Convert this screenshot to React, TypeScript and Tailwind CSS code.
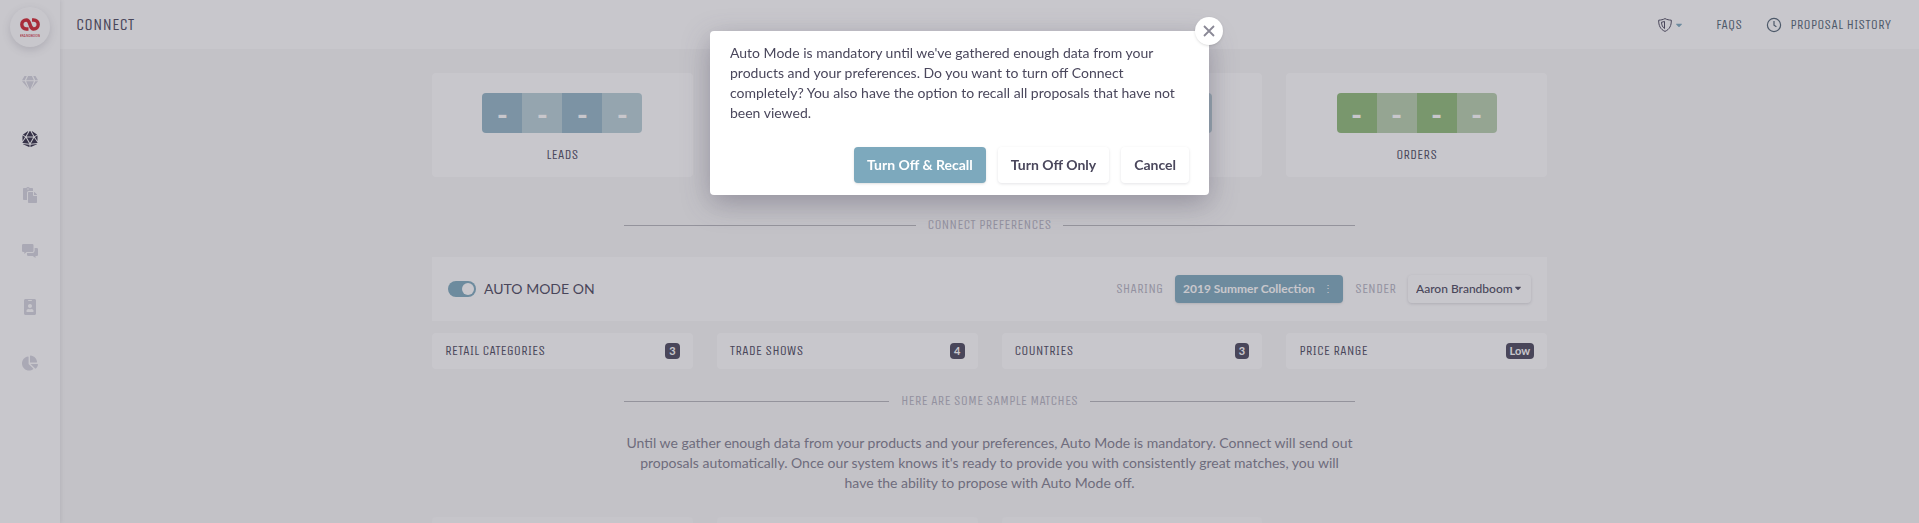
import type { ReactNode } from 'react'
import { clsx } from 'clsx'
import { FaCaretDown, FaChartPie, FaDiceD20, FaGem, FaIdBadge, FaPaste } from 'react-icons/fa'

const condensed = "font-['Unica_One','Roboto_Condensed',sans-serif] uppercase"

const CommentsIcon = ({ className }: { className?: string }) => (
  <svg viewBox="0 0 16 16" className={className} fill="currentColor" aria-hidden="true">
    <path d="M1.2 1H10.3a1.2 1.2 0 0 1 1.2 1.2v5.6A1.2 1.2 0 0 1 10.3 9H4.6l-2.3 1.9V9H1.2A1.2 1.2 0 0 1 0 7.8V2.2A1.2 1.2 0 0 1 1.2 1z" />
    <path d="M12.6 5h2.2A1.2 1.2 0 0 1 16 6.2v5.6a1.2 1.2 0 0 1-1.2 1.2H13.5v2L10.8 13H6.2A1.2 1.2 0 0 1 5 11.8V10h5.3a2.3 2.3 0 0 0 2.3-2.2z" />
  </svg>
)

const navItems = [
  { label: 'Products', Icon: FaGem },
  { label: 'Connect', Icon: FaDiceD20, active: true },
  { label: 'Line sheets', Icon: FaPaste },
  { label: 'Messages', Icon: CommentsIcon },
  { label: 'Contacts', Icon: FaIdBadge },
  { label: 'Reports', Icon: FaChartPie },
]

const stats = [
  { id: 'leads', label: 'Leads', digit: '-', color: 'blue' },
  { id: 'sent', label: '', digit: '', color: 'blue' },
  { id: 'viewed', label: '', digit: '', color: 'blue' },
  { id: 'orders', label: 'Orders', digit: '-', color: 'green' },
]

const filters = [
  { label: 'Retail Categories', value: '3' },
  { label: 'Trade Shows', value: '4' },
  { label: 'Countries', value: '3' },
  { label: 'Price Range', value: 'Low' },
]

const Logo = () => (
  <a
    href="#home"
    aria-label="Home"
    className="flex size-10 items-center justify-center rounded-full bg-white shadow-[0_3px_8px_rgba(74,71,92,0.2)]"
  >
    <svg viewBox="0 0 20 19" className="h-[19px] w-5" aria-hidden="true">
      <path
        d="M8.5 11H6.3A4.5 4.5 0 0 1 6.3 2C11.3 2 8.7 11 13.7 11A4.5 4.5 0 0 0 13.7 2H12"
        fill="none"
        stroke="#d2232f"
        strokeWidth="3.4"
      />
      <text x="10" y="18.5" textAnchor="middle" fontSize="4" fill="#d2232f" fontFamily="Roboto Condensed, sans-serif">
        BRANDBOOM
      </text>
    </svg>
  </a>
)

const ShieldIcon = () => (
  <svg viewBox="0 0 14 14" className="size-3.5" fill="none" stroke="#4a475c" aria-hidden="true">
    <path d="M7 .6C5 1.7 3 2 .7 2.2C.5 7.5 2.5 11.5 7 13.4C11.5 11.5 13.5 7.5 13.3 2.2C11 2 9 1.7 7 .6z" />
    <path d="M6.5 3.4C5.5 3.9 4.5 4.1 3.5 4.2C3.6 7 4.6 9.2 6.5 10.5z" />
  </svg>
)

const ClockIcon = () => (
  <svg viewBox="0 0 16 16" className="size-4" fill="none" stroke="currentColor" strokeWidth="1.2" aria-hidden="true">
    <circle cx="8" cy="8" r="6.6" />
    <path d="M8 4v4.2l2.4 1.6" />
  </svg>
)

const Sidebar = () => (
  <nav className="z-10 flex w-15 shrink-0 flex-col items-center bg-white pt-[7px] shadow-[1px_0_4px_rgba(74,71,92,0.12)]">
    <Logo />
    <ul className="mt-2 w-full">
      {navItems.map(({ label, Icon, active }) => (
        <li key={label}>
          <a
            href="#nav"
            aria-label={label}
            className={clsx(
              'flex h-14 items-center justify-center',
              active ? 'text-[#2e2a42]' : 'text-[#d5d4de]'
            )}
          >
            <Icon className="size-4" />
          </a>
        </li>
      ))}
    </ul>
  </nav>
)

const Header = () => (
  <header className="flex h-[49px] shrink-0 items-center justify-between bg-white pr-7 pl-4 text-[#4a475c]">
    <h1 className={clsx(condensed, 'text-[17px]')}>Connect</h1>
    <div className={clsx(condensed, 'flex items-center text-sm text-[#4f6272]')}>
      <button type="button" aria-label="Security" className="mr-8 flex items-center gap-0.5">
        <ShieldIcon />
        <FaCaretDown className="size-2.5 text-[#7da9bd]" />
      </button>
      <a href="#faqs" className="mr-6">
        FAQs
      </a>
      <a href="#history" className="flex items-center gap-2">
        <ClockIcon />
        Proposal History
      </a>
    </div>
  </header>
)

const StatCard = ({ label, digit, color }: { label: string; digit: string; color: string }) => (
  <div className="flex h-26 flex-col items-center rounded-sm bg-white pt-5">
    <div className="grid h-10 w-40 grid-cols-4 overflow-hidden rounded-sm text-3xl leading-9 font-bold text-white">
      {[0, 1, 2, 3].map((cell) => (
        <span
          key={cell}
          className={clsx(
            'flex items-center justify-center pt-0.5',
            color === 'blue' && (cell % 2 ? 'bg-[#b7cfd6]' : 'bg-[#93b5c6]'),
            color === 'green' && (cell % 2 ? 'bg-[#b7cfac]' : 'bg-[#8fbb78]')
          )}
        >
          {digit}
        </span>
      ))}
    </div>
    <p className={clsx(condensed, 'mt-3 text-sm')}>{label}</p>
  </div>
)

const Divider = ({ children }: { children: ReactNode }) => (
  <div className="mx-auto flex w-full max-w-[731px] items-center gap-3">
    <span className="h-px flex-1 bg-[#b5b5ba]" />
    <h2 className={clsx(condensed, 'text-sm text-[#b3b2bf]')}>{children}</h2>
    <span className="h-px flex-1 bg-[#b5b5ba]" />
  </div>
)

const AutoModePanel = () => (
  <section className="mt-[22px] flex h-16 items-center justify-between bg-white px-4">
    <label className="flex items-center gap-2 text-sm">
      <input type="checkbox" defaultChecked className="peer sr-only" />
      <span className="flex h-4 w-7 items-center justify-end rounded-full bg-[#7da9bd] px-0.5">
        <span className="size-3 rounded-full bg-white" />
      </span>
      AUTO MODE ON
    </label>
    <div className="flex items-center gap-3 text-xs">
      <span className={clsx(condensed, 'text-sm text-[#b3b2bf]')}>Sharing</span>
      <button
        type="button"
        className="flex h-7 items-center gap-2 rounded-sm bg-[#7da9bd] pr-2.5 pl-2 font-bold text-white shadow-sm"
      >
        2019 Summer Collection
        <span className="text-[10px] font-normal">⋮</span>
      </button>
      <label htmlFor="sender" className={clsx(condensed, 'text-sm text-[#b3b2bf]')}>
        Sender
      </label>
      <div className="relative">
        <select
          id="sender"
          className="h-7 appearance-none rounded-sm bg-white pr-[18px] pl-2 font-medium shadow-[0_1px_3px_rgba(74,71,92,0.2)]"
        >
          <option>Aaron Brandboom</option>
        </select>
        <FaCaretDown className="pointer-events-none absolute top-2 right-2 size-2.5" />
      </div>
    </div>
  </section>
)

const TurnOffDialog = () => (
  <div className="fixed inset-0 z-20 flex items-start justify-center bg-[#4a4755]/30 pt-[31px]">
    <div
      role="dialog"
      aria-modal="true"
      className="relative w-full max-w-[499px] rounded-sm bg-white px-5 py-3 text-sm shadow-[0_8px_28px_rgba(74,71,92,0.4)]"
    >
      <button
        type="button"
        aria-label="Close"
        className="absolute -top-3.5 -right-3.5 flex size-7 items-center justify-center rounded-full bg-white text-[#8a8896] shadow-sm"
      >
        <svg viewBox="0 0 12 12" className="size-3" stroke="currentColor" strokeWidth="1.8" aria-hidden="true">
          <path d="M1 1l10 10M11 1L1 11" />
        </svg>
      </button>
      <p>
        Auto Mode is mandatory until we've gathered enough data from your products and your preferences. Do you
        want to turn off Connect completely? You also have the option to recall all proposals that have not been
        viewed.
      </p>
      <div className="mt-6 flex justify-end gap-3 font-bold">
        <button type="button" className="h-9 rounded-sm bg-[#7da9bd] px-[13px] text-white shadow-sm">
          Turn Off &amp; Recall
        </button>
        <button type="button" className="h-9 rounded-sm bg-white px-[13px] shadow-[0_1px_3px_rgba(74,71,92,0.15)]">
          Turn Off Only
        </button>
        <button type="button" className="h-9 rounded-sm bg-white px-[13px] shadow-[0_1px_3px_rgba(74,71,92,0.15)]">
          Cancel
        </button>
      </div>
    </div>
  </div>
)

const App = () => (
  <div className="flex h-screen overflow-hidden bg-[#f8f8f8] font-['Lato',sans-serif] text-[#4a475c]">
    <Sidebar />
    <div className="flex min-w-0 flex-1 flex-col">
      <Header />
      <main className="min-h-0 flex-1 overflow-hidden px-6 pt-6">
        <div className="mx-auto max-w-[1115px]">
          <section className="mb-[38px] grid grid-cols-4 gap-6">
            {stats.map(({ id, label, digit, color }) => (
              <StatCard key={id} label={label} digit={digit} color={color} />
            ))}
          </section>

          <Divider>Connect Preferences</Divider>
          <AutoModePanel />
          <section className="mt-3 mb-[22px] grid grid-cols-4 gap-6">
            {filters.map(({ label, value }) => (
              <button
                key={label}
                type="button"
                className="flex h-9 items-center justify-between rounded-sm bg-white px-[13px]"
              >
                <span className={clsx(condensed, 'text-sm')}>{label}</span>
                <span className="h-4 rounded-sm bg-[#4a475c] px-1 text-[11px] leading-4 font-bold text-white">
                  {value}
                </span>
              </button>
            ))}
          </section>

          <Divider>Here are some sample matches</Divider>
          <p className="mx-auto mt-[22px] max-w-[731px] text-center text-sm text-[#7f7d8e]">
            Until we gather enough data from your products and your preferences, Auto Mode is mandatory. Connect
            will send out proposals automatically. Once our system knows it's ready to provide you with
            consistently great matches, you will have the ability to propose with Auto Mode off.
          </p>
          <section className="mt-6 grid grid-cols-4 gap-6">
            {[0, 1, 2].map((match) => (
              <div key={match} className="h-40 rounded-sm bg-white/50" />
            ))}
          </section>
        </div>
      </main>
    </div>
    <TurnOffDialog />
  </div>
)

export default App
